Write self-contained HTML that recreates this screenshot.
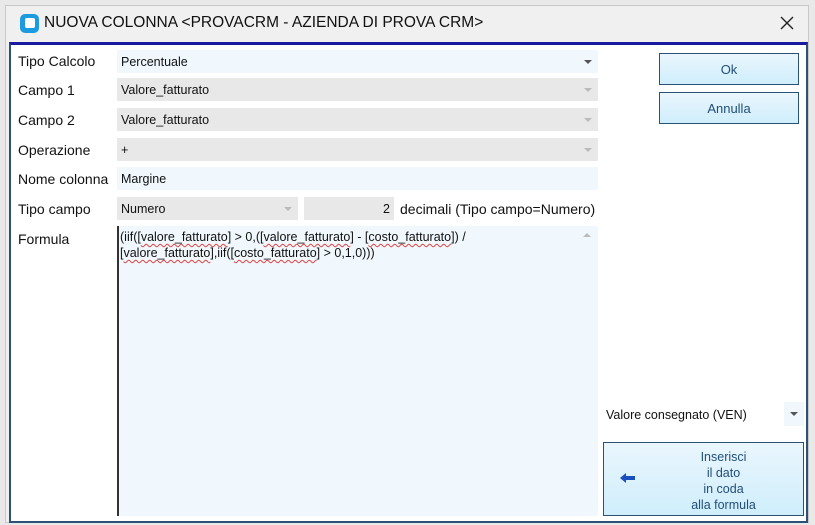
<!DOCTYPE html>
<html><head><meta charset="utf-8"><style>
body{margin:0;width:815px;height:525px;background:#e9e9e9;font-family:"Liberation Sans",sans-serif;position:relative;overflow:hidden}
.a{position:absolute}
.win{left:5px;top:5px;width:804px;height:518px;background:#f0f0f0;border:1px solid #c8c8c8;box-sizing:border-box}
.content{left:9px;top:42px;width:799px;height:481px;background:#fff;border:2px solid #2b5276;border-top:3px solid #1a1aa0;box-sizing:border-box}
.lbl{font-size:14px;color:#111;left:18px}
.fld{left:117px;width:481px;height:23px;background:#e8e8e8;font-size:12.5px;line-height:24px;padding-left:4px;box-sizing:border-box;color:#111}
.arr{position:absolute;right:6px;top:10px;width:0;height:0;border-left:4px solid transparent;border-right:4px solid transparent;border-top:4px solid #bbb}
.btn{border:1px solid #2b5276;background:linear-gradient(#eaf6fd,#cfeefc);color:#1f4e79;font-size:13px;text-align:center;box-sizing:border-box}
u{text-decoration:underline wavy #e04040;text-decoration-thickness:1px;text-underline-offset:2px}
</style></head><body>
<div class="a win"></div>
<div class="a" style="left:20px;top:14px;width:19px;height:19px;background:#1e9be0;border-radius:5px"></div>
<div class="a" style="left:25px;top:18px;width:10px;height:10px;background:#fff;border-radius:2px"></div>
<div class="a" style="left:44px;top:14px;font-size:15.5px;color:#111">NUOVA COLONNA &lt;PROVACRM - AZIENDA DI PROVA CRM&gt;</div>
<svg class="a" style="left:780px;top:16px" width="14" height="14"><path d="M1 1L13 13M13 1L1 13" stroke="#222" stroke-width="1.4"/></svg>
<div class="a content"></div>

<div class="a lbl" style="top:53px">Tipo Calcolo</div>
<div class="a fld" style="top:50px;background:#f0f8fd">Percentuale<div class="arr" style="border-top-color:#555"></div></div>
<div class="a lbl" style="top:82px">Campo 1</div>
<div class="a fld" style="top:78px">Valore_fatturato<div class="arr"></div></div>
<div class="a lbl" style="top:112px">Campo 2</div>
<div class="a fld" style="top:108px">Valore_fatturato<div class="arr"></div></div>
<div class="a lbl" style="top:142px">Operazione</div>
<div class="a fld" style="top:138px">+<div class="arr"></div></div>
<div class="a lbl" style="top:171px">Nome colonna</div>
<div class="a fld" style="top:167px;background:#f0f8fd">Margine</div>
<div class="a lbl" style="top:201px">Tipo campo</div>
<div class="a fld" style="top:197px;width:181px">Numero<div class="arr"></div></div>
<div class="a fld" style="top:197px;left:304px;width:90px;text-align:right;padding-right:4px">2</div>
<div class="a" style="left:400px;top:201px;font-size:14px;color:#111">decimali (Tipo campo=Numero)</div>
<div class="a lbl" style="top:231px">Formula</div>
<div class="a" style="left:117px;top:226px;width:481px;height:290px;background:#f0f8fd;border-left:2px solid #333;box-sizing:border-box"></div>
<div class="a" style="left:120px;top:229px;font-size:12.5px;line-height:16px;color:#111;width:460px">(iif([<u>valore_fatturato</u>] &gt; 0,([<u>valore_fatturato</u>] - [<u>costo_fatturato</u>]) /<br>[<u>valore_fatturato</u>],iif([<u>costo_fatturato</u>] &gt; 0,1,0)))</div>
<div class="a" style="left:583px;top:233px;border-left:4px solid transparent;border-right:4px solid transparent;border-bottom:4px solid #bbb"></div>

<div class="a btn" style="left:659px;top:53px;width:140px;height:32px;line-height:32px">Ok</div>
<div class="a btn" style="left:659px;top:92px;width:140px;height:32px;line-height:32px">Annulla</div>
<div class="a" style="left:606px;top:408px;font-size:12.5px;color:#111">Valore consegnato (VEN)</div>
<div class="a" style="left:784px;top:402px;width:20px;height:24px;background:#f0f8fd"><div class="arr" style="border-top-color:#555;right:6px"></div></div>
<div class="a btn" style="left:603px;top:442px;width:201px;height:74px;font-size:12.5px;line-height:16px;padding-top:6px;padding-left:40px">Inserisci<br>il dato<br>in coda<br>alla formula</div>
<svg class="a" style="left:619px;top:472px" width="17" height="12"><path d="M1 6 L7 1 L7 4 L16 4 L16 8 L7 8 L7 11 Z" fill="#1a4fc0"/></svg>
</body></html>
